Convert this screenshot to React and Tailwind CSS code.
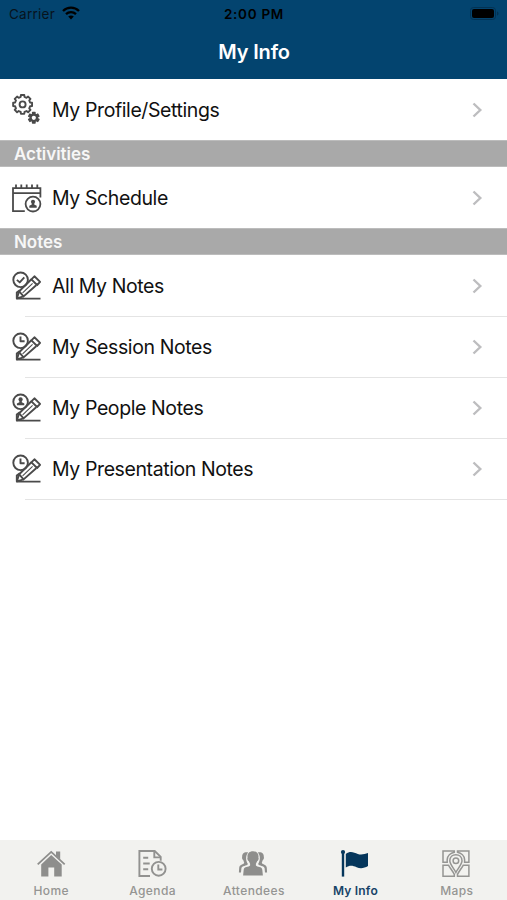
function gearPath(cx, cy, teeth, outer, inner) {
  const step = (Math.PI * 2) / teeth;
  const points = [];
  for (let i = 0; i < teeth; i++) {
    const a = i * step - Math.PI / 2;
    [
      [-0.32, inner],
      [-0.22, outer],
      [0.22, outer],
      [0.32, inner],
    ].forEach(([offset, r]) => {
      const t = a + offset * step;
      points.push(`${(cx + r * Math.cos(t)).toFixed(2)} ${(cy + r * Math.sin(t)).toFixed(2)}`);
    });
  }
  return `M${points.join('L')}Z`;
}

function GearsIcon() {
  return (
    <svg className="h-8 w-8" viewBox="0 0 32 32" fill="none" stroke="#4a4a4a" strokeLinejoin="round">
      <path d={gearPath(12.6, 10.4, 8, 9.6, 7.7)} strokeWidth="1.9" />
      <circle cx="12.6" cy="10.4" r="3" strokeWidth="1.9" />
      <path d={gearPath(23.8, 23.8, 6, 5.4, 3.7)} strokeWidth="1.4" fill="#4a4a4a" />
      <circle cx="23.8" cy="23.8" r="2.1" stroke="none" fill="#fff" />
    </svg>
  );
}

function ScheduleIcon() {
  return (
    <svg className="h-8 w-8" viewBox="0 0 32 32" fill="none" stroke="#4a4a4a" strokeWidth="1.8">
      <path d="M14.8 29.2H3V6.2H30.4V11.2H3M30.4 11V15.5" />
      <path d="M6 2.5V6M11.3 2.5V6M16.7 2.5V6M22 2.5V6M27.3 2.5V6" />
      <circle cx="23" cy="22.1" r="7.4" />
      <circle cx="23" cy="19.8" r="2.1" fill="#4a4a4a" stroke="none" />
      <path d="M21.8 20.9H24.2V22.6L26.7 23.7V25.8H19.3V23.7L21.8 22.6Z" fill="#4a4a4a" stroke="none" />
    </svg>
  );
}

function NoteIcon({ badge }) {
  return (
    <svg className="h-8 w-8" viewBox="0 0 32 32" fill="none" stroke="#4a4a4a" strokeWidth="1.9" strokeLinejoin="round">
      <circle cx="10.6" cy="9.8" r="7.3" />
      {badge === 'check' && <path d="M6.9 9.9L9.7 12.4L14.3 7.4" />}
      {badge === 'clock' && <path d="M10.5 5.6V10.3H14.6" />}
      {badge === 'person' && (
        <g fill="#4a4a4a" stroke="none">
          <circle cx="10.6" cy="7.4" r="2.1" />
          <path d="M9.4 8.2H11.8V10.3L14.3 11.4V13.3H6.9V11.4L9.4 10.3Z" />
        </g>
      )}
      <path d="M21.4 9.3L24.4 6.3L30.1 11.9L27.1 15Z" />
      <path d="M21.4 9.3L9.2 21.3L13.6 26.4L26.2 15.2" />
      <path d="M22.6 13.3L12.6 22.9" strokeWidth="1.1" />
      <path d="M9.2 21.3L6.9 28.3L13.6 26.4" />
      <path d="M9.8 20.2L6.8 22.6V28.6H30.5" />
    </svg>
  );
}

function HomeIcon() {
  return (
    <svg className="h-8 w-8" viewBox="0 0 32 32" fill="#8e8e8c">
      <path d="M6.2 17.5L16.2 8L26.7 17.5V29.4H19.2V20.4H13.4V29.4H6.2Z" />
      <path d="M2.7 17.4L16.2 4.9L29.7 17.4" fill="none" stroke="#8e8e8c" strokeWidth="1.8" />
      <path d="M21 4.6H25.2V12.6L21 8.8Z" />
    </svg>
  );
}

function AgendaIcon() {
  return (
    <svg className="h-8 w-8" viewBox="0 0 32 32" fill="none" stroke="#929290" strokeWidth="1.9">
      <path d="M14 29H3.4V4H18.7L24.7 9.8V13.8" />
      <path d="M18.3 4.2V10.4H24.5" />
      <path d="M7.2 10.8H12.2M7.2 16.5H13.7M7.2 22.2H12.2" />
      <circle cx="22.7" cy="21.8" r="6.9" />
      <path d="M22.3 17.6V22.5H26.4" />
    </svg>
  );
}

function AttendeesIcon() {
  return (
    <svg className="h-8 w-8" viewBox="0 0 32 32" fill="#8e8e8c">
      <path d="M11.2 5.6C7.5 4.5 4.8 6.8 5.2 10.1C4.7 10.7 5.2 12.7 6.2 13.1L7.2 15.7C6.5 17.8 2.4 17.3 2.2 20.8L1.9 25.5H4L4.4 21.3C4.7 18.5 9.9 19.1 10.9 16.9C8.8 14.2 8.2 8.8 11.2 5.6Z" />
      <path d="M20.8 5.6C24.5 4.5 27.2 6.8 26.8 10.1C27.3 10.7 26.8 12.7 25.8 13.1L24.8 15.7C25.5 17.8 29.6 17.3 29.8 20.8L30.1 25.5H28L27.6 21.3C27.3 18.5 22.1 19.1 21.1 16.9C23.2 14.2 23.8 8.8 20.8 5.6Z" />
      <path d="M16 4.3C11.8 4.3 10 7.1 10.6 10.7C9.9 11.3 10.7 13.6 11.7 14L13.1 16.8V18.6C11.7 20.5 7.2 19.3 6.7 22.8L6.1 28.5H25.9L25.3 22.8C24.8 19.3 20.3 20.5 18.9 18.6V16.8L20.3 14C21.3 13.6 22.1 11.3 21.4 10.7C22 7.1 20.2 4.3 16 4.3Z" />
    </svg>
  );
}

function FlagIcon() {
  return (
    <svg className="h-8 w-8" viewBox="0 0 32 32" fill="#05365b">
      <circle cx="4" cy="5.1" r="2.1" />
      <path d="M2.8 5H5.2V29.6H2.8Z" />
      <path d="M6.8 7C11.4 3.4 14.8 5.6 18.8 7C22.2 8.2 25.8 7.1 29 6.1V19C25.3 21.2 21.6 22 17.6 20.2C13.8 18.5 10.6 17.9 6.8 20.5Z" />
    </svg>
  );
}

function MapsIcon() {
  return (
    <svg className="h-8 w-8" viewBox="0 0 32 32" fill="none" stroke="#959593" strokeWidth="1.5">
      <path d="M7.2 15.3H3V4.1H14.3V5.2C10.5 6 7.4 9 7.2 12.6Z" />
      <path d="M24.6 15.3H28.9V4.1H17.5V5.2C21.3 6 24.4 9 24.6 12.6Z" />
      <path d="M8.6 18.3H3V29.2H14.3V27.3C12.8 24.4 10.2 21.2 8.6 18.3Z" />
      <path d="M23.2 18.3H28.9V29.2H17.5V27.3C19 24.4 21.6 21.2 23.2 18.3Z" />
      <path d="M15.9 25.4C14.4 22 9.8 17.6 9.8 13.8C9.8 10.1 12.5 7.7 15.9 7.7C19.3 7.7 22 10.1 22 13.8C22 17.6 17.4 22 15.9 25.4Z" />
      <circle cx="15.9" cy="13.8" r="2.8" />
    </svg>
  );
}

function Row({ icon, label, divider }) {
  return (
    <li className="relative flex h-[61px] items-center pl-[10px] pr-[24px]">
      {icon}
      <span className="ml-[10px] flex-1 whitespace-nowrap pt-[2px] text-[19.5px] tracking-[-0.4px] text-[#111]">{label}</span>
      <svg className="h-4 w-[11px]" viewBox="0 0 11 16" fill="none" stroke="#bdbdbf" strokeWidth="2.4">
        <path d="M1.5 1.5L8.3 8L1.5 14.5" />
      </svg>
      {divider && <div className="absolute -bottom-px left-[25px] right-0 h-px bg-[#e4e4e4]" />}
    </li>
  );
}

function SectionHeader({ title }) {
  return (
    <h2 className="flex h-[27px] items-center border-y border-[#bcbcbc] bg-[#a9a9a9] pl-[14px] pt-[2px] text-[17px] font-semibold tracking-[-0.05px] text-[#f7f7f7]">
      {title}
    </h2>
  );
}

const notes = [
  { label: 'All My Notes', badge: 'check' },
  { label: 'My Session Notes', badge: 'clock' },
  { label: 'My People Notes', badge: 'person' },
  { label: 'My Presentation Notes', badge: 'clock' },
];

const tabs = [
  { label: 'Home', icon: <HomeIcon /> },
  { label: 'Agenda', icon: <AgendaIcon /> },
  { label: 'Attendees', icon: <AttendeesIcon /> },
  { label: 'My Info', icon: <FlagIcon />, active: true },
  { label: 'Maps', icon: <MapsIcon /> },
];

function App() {
  return (
    <div className="flex h-[900px] w-[507px] flex-col overflow-hidden bg-white font-['Inter',sans-serif]">
      <header className="h-[79px] shrink-0 bg-[#03446f]">
        {/* Status bar */}
        <div className="grid h-[27px] grid-cols-3 items-center pl-[9px] pr-[8px] text-[13.5px] text-[#07131d]">
          <div className="flex items-center gap-[7px]">
            <span className="pt-px tracking-[0.25px]">Carrier</span>
            <svg className="-mt-px h-[14px] w-[18px]" viewBox="0 0 18 14" fill="none" stroke="#000" strokeWidth="2.3">
              <path d="M1 5C5.5 0.5 12.5 0.5 17 5M4 8.2C6.8 5.5 11.2 5.5 14 8.2" />
              <path d="M9 13.5L6.2 10.5C7.8 9.1 10.2 9.1 11.8 10.5Z" fill="#000" stroke="none" />
            </svg>
          </div>
          <span className="pt-px text-center font-semibold tracking-[0.7px] text-black">2:00 PM</span>
          <svg className="h-[13px] w-[29px] justify-self-end" viewBox="0 0 29 13">
            <rect x="0.5" y="0.5" width="25" height="12" rx="3" fill="none" stroke="#033253" />
            <rect x="2" y="2" width="22" height="9" rx="2" fill="#000" />
            <path d="M27 4.5C29 5 29 8 27 8.5Z" fill="#033253" />
          </svg>
        </div>
        <h1 className="ml-px pt-[10px] text-center text-[20px] font-semibold leading-[30px] tracking-[-0.15px] text-white">My Info</h1>
      </header>

      <main className="flex-1">
        <ul>
          <Row icon={<GearsIcon />} label="My Profile/Settings" />
        </ul>
        <SectionHeader title="Activities" />
        <ul>
          <Row icon={<ScheduleIcon />} label="My Schedule" />
        </ul>
        <SectionHeader title="Notes" />
        <ul>
          {notes.map((note) => (
            <Row key={note.label} icon={<NoteIcon badge={note.badge} />} label={note.label} divider />
          ))}
        </ul>
      </main>

      {/* Bottom tabs */}
      <nav className="grid h-[60px] shrink-0 grid-cols-5 bg-[#f2f2ef]">
        {tabs.map((tab) => (
          <div
            key={tab.label}
            className={`flex flex-col items-center pt-[7px] text-[12px] leading-[16px] ${
              tab.active ? 'font-semibold tracking-[0.2px] text-[#174367]' : 'font-medium tracking-[0.4px] text-[#959593]'
            }`}
          >
            {tab.icon}
            <span className="ml-px mt-[4px]">{tab.label}</span>
          </div>
        ))}
      </nav>
    </div>
  );
}

export default App;
